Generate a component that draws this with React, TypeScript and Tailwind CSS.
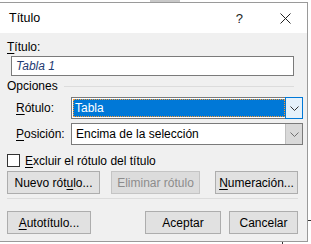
import React from 'react';

const font = { fontFamily: '"Liberation Sans", Arial, sans-serif' };

const Chevron: React.FC<{ color?: string }> = ({ color = '#333' }) => (
  <svg width="9" height="5" viewBox="0 0 9 5" fill="none">
    <path d="M0.5 0.5 L4.5 4.5 L8.5 0.5" stroke={color} strokeWidth="1" />
  </svg>
);

const Btn: React.FC<{ w: string; disabled?: boolean; children: React.ReactNode }> = ({ w, disabled, children }) => (
  <div
    className={`${w} h-[23px] shrink-0 flex items-center justify-center border ${
      disabled ? 'border-[#c4c4c4] bg-[#dcdcdc] text-[#8c8c8c]' : 'border-[#adadad] bg-[#e1e1e1] text-black'
    }`}
  >
    {children}
  </div>
);

export default function App() {
  return (
    <div className="relative w-[311px] h-[244px] bg-white overflow-hidden text-[12px] leading-none" style={font}>
      {/* bits of the document behind the dialog */}
      <div className="absolute left-[150px] top-0 w-[30px] h-[2px] bg-[#c8c8c8]" />
      <div className="absolute left-[308px] top-[220px] w-[3px] h-px bg-[#333]" />
      <div className="absolute left-[282px] top-[242px] w-px h-[2px] bg-[#333]" />

      <div className="absolute left-[-1px] top-[2px] w-[309px] h-[240px] border border-[#9a9a9a] bg-[#f0f0f0] flex flex-col">
        {/* title bar */}
        <div className="h-[30px] bg-white flex items-center pl-[9px] shrink-0">
          <span className="text-[12.5px] text-black">Título</span>
          <span className="ml-auto mr-[37px] text-[13px] text-[#222]">?</span>
          <svg width="11" height="11" viewBox="0 0 11 11" className="mr-[16px]">
            <path d="M0.5 0.5 L10.5 10.5 M10.5 0.5 L0.5 10.5" stroke="#222" strokeWidth="1" />
          </svg>
        </div>

        <div className="flex flex-col pl-[7px] pr-[9px]">
          <div className="mt-[8px]">
            <span className="underline underline-offset-2">T</span>ítulo:
          </div>
          <div className="mt-[3px] ml-[4px] mr-[4px] h-[20px] border border-[#7a7a7a] bg-white flex items-center pl-[4px]">
            <span className="italic text-[#1f3b73]">Tabla 1</span>
          </div>

          <div className="mt-[4px] flex items-center mr-[4px]">
            <span>Opciones</span>
            <div className="flex-1 h-px bg-[#dcdcdc] ml-[6px]" />
          </div>

          <div className="mt-[5px] flex items-center ml-[9px] -mr-[5px]">
            <span className="w-[55px] shrink-0">
              <span className="underline underline-offset-2">R</span>ótulo:
            </span>
            <div className="flex-1 h-[22px] border border-[#7a7a7a] bg-white flex items-stretch">
              <div className="flex-1 m-[1px] bg-[#0078d7] border border-dotted border-[#ff9a2e] flex items-center pl-[1px] text-white">
                Tabla
              </div>
              <div className="w-[18px] bg-[#e5f1fb] border border-[#0078d7] -m-px flex items-center justify-center">
                <Chevron />
              </div>
            </div>
          </div>

          <div className="mt-[4px] flex items-center ml-[9px] -mr-[5px]">
            <span className="w-[55px] shrink-0">
              <span className="underline underline-offset-2">P</span>osición:
            </span>
            <div className="flex-1 h-[22px] border border-[#7a7a7a] bg-white flex items-stretch">
              <div className="flex-1 flex items-center pl-[4px]">Encima de la selección</div>
              <div className="w-[17px] bg-[#d9d9d9] border-l border-[#c0c0c0] flex items-center justify-center">
                <Chevron color="#707070" />
              </div>
            </div>
          </div>

          <div className="mt-[9px] flex items-center">
            <div className="w-[13px] h-[13px] shrink-0 border border-[#333] bg-white" />
            <span className="ml-[5px]">
              <span className="underline underline-offset-2">E</span>xcluir el rótulo del título
            </span>
          </div>

          <div className="mt-[4px] flex items-center">
            <Btn w="w-[93px]">
              Nuevo rót<span className="underline underline-offset-2">u</span>lo...
            </Btn>
            <div className="ml-[11px]">
              <Btn w="w-[89px]" disabled>
                Eliminar rótulo
              </Btn>
            </div>
            <div className="ml-auto">
              <Btn w="w-[83px]">
                <span className="underline underline-offset-2">N</span>umeración...
              </Btn>
            </div>
          </div>

          <div className="mt-[4px] h-px bg-[#dcdcdc]" />

          <div className="mt-[12px] flex items-center">
            <Btn w="w-[84px]">
              <span className="underline underline-offset-2">A</span>utotítulo...
            </Btn>
            <div className="ml-auto">
              <Btn w="w-[76px]">Aceptar</Btn>
            </div>
            <div className="ml-[8px]">
              <Btn w="w-[69px]">Cancelar</Btn>
            </div>
          </div>
        </div>
      </div>
    </div>
  );
}
